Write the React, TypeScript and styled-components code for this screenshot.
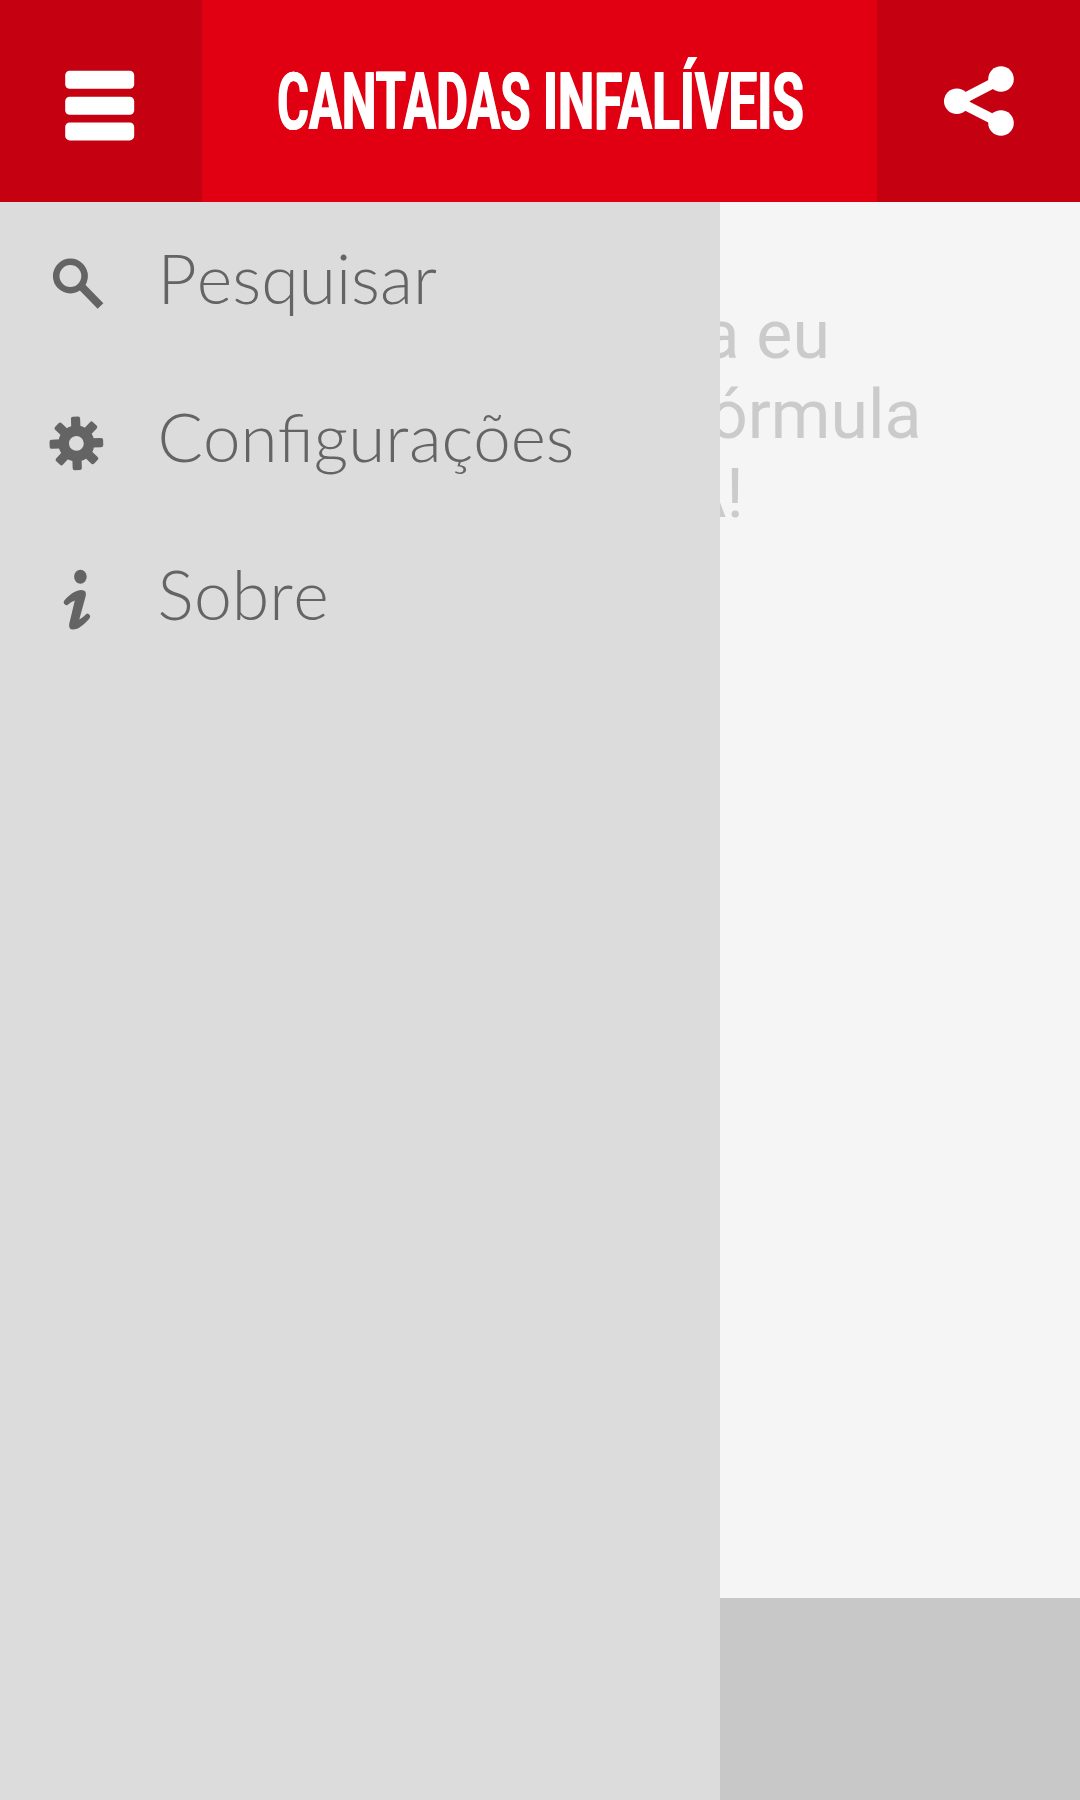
import React from "react";
import styled, { createGlobalStyle } from "styled-components";

const GlobalStyle = createGlobalStyle`
  body { margin: 0; background: #f5f5f5; }
`;

const Screen = styled.div`
  width: 1080px;
  height: 1800px;
  overflow: hidden;
  display: flex;
  flex-direction: column;
`;

const Header = styled.header`
  height: 202px;
  flex: none;
  display: grid;
  grid-template-columns: 202px 1fr 203px;
  background: #e10012;
`;

const HeaderButton = styled.button`
  border: 0;
  margin: 0;
  padding: 0;
  background: #c50011;
  display: flex;
`;

const Title = styled.h1`
  margin: 0;
  padding: 52px 0 0 75px;
  display: flex;
  gap: 15px;
  font: 700 80px/101px Roboto, sans-serif;
  color: #fff;
  text-shadow: 1px 0 #fff, -1px 0 #fff;
`;

const Word = styled.span<{ $width: number; $squeeze: number }>`
  width: ${(p) => p.$width}px;
  white-space: nowrap;
  transform: scaleX(${(p) => p.$squeeze});
  transform-origin: 0 0;
`;

const Body = styled.div`
  flex: 1;
  display: grid;
  grid-template-columns: 720px 360px;
`;

const Drawer = styled.nav`
  background: #dcdcdc;
`;

const MenuItem = styled.a`
  height: 158px;
  display: grid;
  grid-template-columns: 157.5px 1fr;
  align-items: center;
`;

const MenuIcon = styled.svg`
  width: 158px;
  height: 158px;
  display: block;
`;

const MenuLabel = styled.span<{ $size: number }>`
  padding-bottom: 7px;
  font: 300 ${(p) => p.$size}px/80px Lato, sans-serif;
  font-kerning: none;
  font-variant-ligatures: common-ligatures;
  color: #646464;
`;

const Content = styled.main`
  display: flex;
  flex-direction: column;
  background: #f5f5f5;
  overflow: hidden;
`;

const Quote = styled.div`
  flex: 1;
  padding-top: 94px;
  font: 400 68px/79.7px Roboto, sans-serif;
  color: #cbcbcb;
`;

const Line = styled.div<{ $shift: number }>`
  margin-left: ${(p) => p.$shift}px;
  white-space: nowrap;
`;

const Footer = styled.footer`
  height: 202px;
  background: #c8c8c8;
`;

const C = "#646464";

export default function App() {
  return (
    <>
      <GlobalStyle />
      <Screen>
        <Header>
          <HeaderButton aria-label="Menu">
            <svg width="202" height="202" fill="#fff">
              <rect x="65.2" y="70.8" width="69" height="18" rx="4.5" />
              <rect x="65.2" y="96.8" width="69" height="18" rx="4.5" />
              <rect x="65.2" y="122.4" width="69" height="18" rx="4.5" />
            </svg>
          </HeaderButton>
          <Title>
            <Word $width={251} $squeeze={0.611}>CANTADAS</Word>
            <Word $width={257} $squeeze={0.641}>INFALÍVEIS</Word>
          </Title>
          <HeaderButton aria-label="Share">
            <svg width="203" height="202" viewBox="877 0 203 202" fill="#fff">
              <path d="M1001.3 79L958 101.500L1001.3 123.500" fill="none" stroke="#fff" strokeWidth="10" />
              <circle cx="1001" cy="79" r="12.8" />
              <circle cx="956.8" cy="101.3" r="12.8" />
              <circle cx="1001" cy="123" r="12.8" />
            </svg>
          </HeaderButton>
        </Header>
        <Body>
          <Drawer>
            <MenuItem>
              <MenuIcon viewBox="0 202 158 158">
                <circle cx="70.4" cy="276" r="14.2" fill="none" stroke={C} strokeWidth="6.6" />
                <path d="M81 286L100.5 306" stroke={C} strokeWidth="8" />
              </MenuIcon>
              <MenuLabel $size={68}>Pesquisar</MenuLabel>
            </MenuItem>
            <MenuItem>
              <MenuIcon viewBox="0 360 158 158">
                <g transform="translate(76.4 443.4) rotate(-2)">
                  <circle r="12.7" fill="none" stroke={C} strokeWidth="10.6" />
                  {[0, 45, 90, 135, 180, 225, 270, 315].map((a) => (
                    <rect key={a} x="-4.6" y="-26.8" width="9.2" height="13" rx="2" fill={C} transform={`rotate(${a})`} />
                  ))}
                </g>
              </MenuIcon>
              <MenuLabel $size={67.3}>Configurações</MenuLabel>
            </MenuItem>
            <MenuItem>
              <MenuIcon viewBox="0 518 158 158">
                <ellipse cx="80.4" cy="576.7" rx="6.3" ry="7" fill={C} />
                <path d="M64 601C69 595 75 590 81.500 590Q87 590 85.700 596L79.300 619.500Q83 617.500 86.300 614Q88 612.700 90 615.500Q90.800 616.700 89 619C84 624.500 78.500 629.500 73 629.500Q68.300 629.500 69.200 624L74.800 600.500Q71 601.500 67.500 605Q65.500 606 64 603.500Q63.300 602 64 601Z" fill={C} />
              </MenuIcon>
              <MenuLabel $size={68}>Sobre</MenuLabel>
            </MenuItem>
          </Drawer>
          <Content>
            <Quote>
              <Line $shift={-17.5}>a eu</Line>
              <Line $shift={-11}>órmula</Line>
              <Line $shift={-38}>A!</Line>
            </Quote>
            <Footer />
          </Content>
        </Body>
      </Screen>
    </>
  );
}
